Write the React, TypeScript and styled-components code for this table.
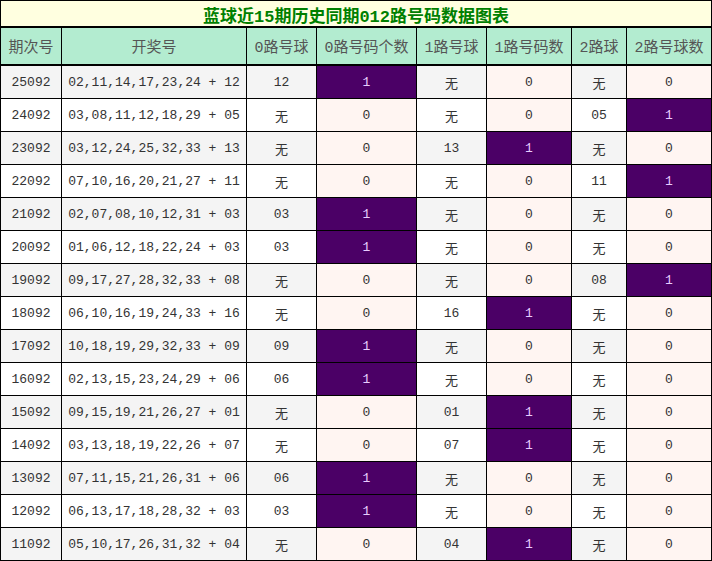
import React from "react";
import styled, { createGlobalStyle } from "styled-components";

const Global = createGlobalStyle`
  html, body { margin: 0; padding: 0; background: #fff; }
  body { font-family: "Liberation Mono", "Noto Sans CJK SC", monospace; }
`;

const COLS = [61, 185, 70, 100, 70, 85, 55, 85];

const Grid = styled.div`
  display: grid;
  grid-template-columns: ${COLS.map((c) => c + "px").join(" ")};
  width: 712px;
  border-left: 1px solid #000;
  border-top: 1px solid #000;
  box-sizing: border-box;
`;

const Title = styled.div`
  grid-column: 1 / -1;
  height: 27px;
  box-sizing: border-box;
  border-right: 1px solid #000;
  border-bottom: 2px solid #000;
  background: #ffffe0;
  color: #008000;
  font-family: "Liberation Mono", "Noto Sans CJK SC", monospace;
  font-weight: bold;
  font-size: 17px;
  display: flex;
  align-items: center;
  justify-content: center;
  padding-top: 1px;
`;

const Head = styled.div`
  height: 38px;
  box-sizing: border-box;
  border-right: 1px solid #000;
  border-bottom: 2px solid #000;
  background: #b3ecd0;
  color: #555;
  font-family: "Liberation Mono", "Noto Sans CJK SC", monospace;
  font-size: 15px;
  display: flex;
  align-items: center;
  justify-content: center;
  white-space: nowrap;
`;

type Tone = "gray" | "white" | "pink" | "purple";

const toneBg: Record<Tone, string> = {
  gray: "#f4f4f4",
  white: "#ffffff",
  pink: "#fff5f2",
  purple: "#4b0066",
};

const Cell = styled.div<{ $tone: Tone }>`
  height: 33px;
  box-sizing: border-box;
  border-right: 1px solid #000;
  border-bottom: 1px solid #000;
  background: ${(p) => toneBg[p.$tone]};
  color: ${(p) => (p.$tone === "purple" ? "#e8ccff" : "#333")};
  font-family: "Liberation Mono", "Noto Sans CJK SC", monospace;
  font-size: 13px;
  display: flex;
  align-items: center;
  justify-content: center;
  white-space: nowrap;
`;

const headers = ["期次号", "开奖号", "0路号球", "0路号码个数", "1路号球", "1路号码数", "2路球", "2路号球数"];

type Row = [string, string, string, number, string, number, string, number];

const rows: Row[] = [
  ["25092", "02,11,14,17,23,24 + 12", "12", 1, "无", 0, "无", 0],
  ["24092", "03,08,11,12,18,29 + 05", "无", 0, "无", 0, "05", 1],
  ["23092", "03,12,24,25,32,33 + 13", "无", 0, "13", 1, "无", 0],
  ["22092", "07,10,16,20,21,27 + 11", "无", 0, "无", 0, "11", 1],
  ["21092", "02,07,08,10,12,31 + 03", "03", 1, "无", 0, "无", 0],
  ["20092", "01,06,12,18,22,24 + 03", "03", 1, "无", 0, "无", 0],
  ["19092", "09,17,27,28,32,33 + 08", "无", 0, "无", 0, "08", 1],
  ["18092", "06,10,16,19,24,33 + 16", "无", 0, "16", 1, "无", 0],
  ["17092", "10,18,19,29,32,33 + 09", "09", 1, "无", 0, "无", 0],
  ["16092", "02,13,15,23,24,29 + 06", "06", 1, "无", 0, "无", 0],
  ["15092", "09,15,19,21,26,27 + 01", "无", 0, "01", 1, "无", 0],
  ["14092", "03,13,18,19,22,26 + 07", "无", 0, "07", 1, "无", 0],
  ["13092", "07,11,15,21,26,31 + 06", "06", 1, "无", 0, "无", 0],
  ["12092", "06,13,17,18,28,32 + 03", "03", 1, "无", 0, "无", 0],
  ["11092", "05,10,17,26,31,32 + 04", "无", 0, "04", 1, "无", 0],
];

export default function App() {
  return (
    <>
      <Global />
      <Grid>
        <Title>蓝球近15期历史同期012路号码数据图表</Title>
        {headers.map((h) => (
          <Head key={h}>{h}</Head>
        ))}
        {rows.map((r, i) => {
          const base: Tone = i % 2 === 0 ? "gray" : "white";
          return (
            <React.Fragment key={r[0]}>
              {r.map((v, j) => {
                const isCount = j === 3 || j === 5 || j === 7;
                const tone: Tone = isCount ? (v === 1 ? "purple" : "pink") : base;
                return (
                  <Cell key={j} $tone={tone}>
                    {String(v)}
                  </Cell>
                );
              })}
            </React.Fragment>
          );
        })}
      </Grid>
    </>
  );
}
